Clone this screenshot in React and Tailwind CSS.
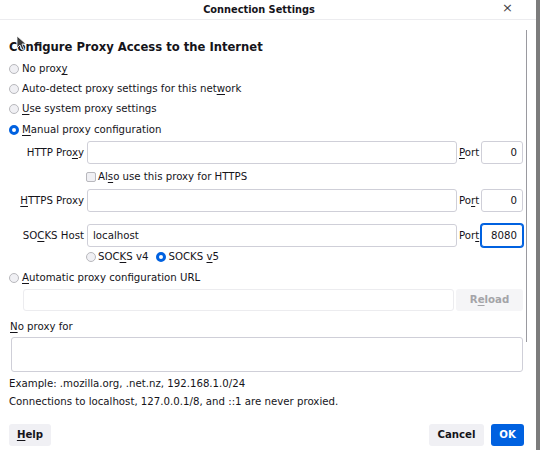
import React from 'react';

const U = ({ children }) => <span className="underline underline-offset-2">{children}</span>;

const Radio = ({ checked }) =>
    checked ? (
        <span className="inline-block w-[10px] h-[10px] rounded-full border-[3px] border-[#0061e0] bg-white shrink-0" />
    ) : (
        <span className="inline-block w-[10px] h-[10px] rounded-full border border-[#b8b8bd] bg-[#f0f0f4] shrink-0" />
    );

const Field = ({ value, focused, right }) => (
    <div
        className={
            'h-[23px] rounded-[3px] bg-white flex items-center px-[5px] ' +
            (right ? 'justify-end ' : '') +
            (focused ? 'border border-[#0061e0] shadow-[0_0_0_1px_#0061e0]' : 'border border-[#cfcfd8]')
        }
    >
        {value}
    </div>
);

const ProxyRow = ({ label, value, port, portLabel, focused }) => (
    <div className="flex items-center">
        <div className="w-[78px] text-right pr-[3px]">{label}</div>
        <div className="w-[370px]">
            <Field value={value} />
        </div>
        <div className="w-[24px] pl-[2px]">{portLabel}</div>
        <div className="w-[42px]">
            <Field value={port} right focused={focused} />
        </div>
    </div>
);

export default function App() {
    return (
        <div
            className="w-[540px] h-[450px] bg-white flex overflow-hidden relative text-[#15141a] text-[10.2px] leading-[14px]"
            style={{ fontFamily: '"DejaVu Sans", Verdana, sans-serif' }}
        >
            <div className="flex-1 flex flex-col relative">
                {/* Title bar */}
                <div className="h-[20px] border-b border-[#ececef] flex items-center justify-center relative pr-[18px]">
                    <span className="font-bold text-[9.8px]">Connection Settings</span>
                    <span className="absolute right-[23px] top-[1px] text-[13px] text-[#444]">×</span>
                </div>

                {/* Scroll area */}
                <div className="flex flex-col pl-[9px] w-[524px]">
                    <h1 className="mt-[19px] h-[16px] font-bold text-[11.6px] leading-[16px]">
                        Configure Proxy Access to the Internet
                    </h1>

                    <div className="mt-[4px] flex flex-col">
                        <label className="h-[20px] flex items-center gap-[3px]">
                            <Radio /> <span>No prox<U>y</U></span>
                        </label>
                        <label className="h-[20px] flex items-center gap-[3px]">
                            <Radio /> <span>Auto-detect proxy settings for this net<U>w</U>ork</span>
                        </label>
                        <label className="h-[20px] flex items-center gap-[3px]">
                            <Radio /> <span><U>U</U>se system proxy settings</span>
                        </label>
                        <label className="h-[21px] flex items-center gap-[3px]">
                            <Radio checked /> <span><U>M</U>anual proxy configuration</span>
                        </label>
                    </div>

                    <div className="flex flex-col mt-[1px]">
                        <ProxyRow
                            label={<span>HTTP Pro<U>x</U>y</span>}
                            portLabel={<span><U>P</U>ort</span>}
                            port="0"
                        />
                        <div className="h-[25px] flex items-center pl-[77px] gap-[2px]">
                            <span className="inline-block w-[10px] h-[10px] rounded-[2px] border border-[#b8b8bd] bg-[#f0f0f4]" />
                            <span>Al<U>s</U>o use this proxy for HTTPS</span>
                        </div>
                        <ProxyRow
                            label={<span><U>H</U>TTPS Proxy</span>}
                            portLabel={<span>Po<U>r</U>t</span>}
                            port="0"
                        />
                        <div className="mt-[12px]">
                            <ProxyRow
                                label={<span>SO<U>C</U>KS Host</span>}
                                value="localhost"
                                portLabel={<span>Por<U>t</U></span>}
                                port="8080"
                                focused
                            />
                        </div>
                        <div className="h-[20px] flex items-center pl-[77px]">
                            <label className="flex items-center gap-[2px]">
                                <Radio /> <span>SOC<U>K</U>S v4</span>
                            </label>
                            <label className="flex items-center gap-[3px] ml-[7px]">
                                <Radio checked /> <span>SOCKS <U>v</U>5</span>
                            </label>
                        </div>
                    </div>

                    <label className="h-[21px] flex items-center gap-[3px]">
                        <Radio /> <span><U>A</U>utomatic proxy configuration URL</span>
                    </label>
                    <div className="mt-[1px] flex items-center pl-[14px] gap-[2px]">
                        <div className="w-[431px] h-[22px] border border-[#ececef] rounded-[3px]" />
                        <div className="w-[67px] h-[22px] bg-[#f5f5f7] rounded-[3px] flex items-center justify-center font-bold text-[#a4a4a8]">
                            R<U>e</U>load
                        </div>
                    </div>

                    <div className="mt-[8px] h-[16px] flex items-center pl-[1px]">
                        <span><U>N</U>o proxy for</span>
                    </div>
                    <div className="mt-[2px] ml-[2px] w-[512px] h-[35px] border border-[#cfcfd8] rounded-[3px]" />
                    <div className="mt-[5px] h-[14px] flex items-center">
                        Example: .mozilla.org, .net.nz, 192.168.1.0/24
                    </div>
                    <div className="mt-[4px] h-[14px] flex items-center">
                        Connections to localhost, 127.0.0.1/8, and ::1 are never proxied.
                    </div>
                </div>

                {/* Scrollbar */}
                <div className="absolute left-[526px] top-[30px] w-[1px] h-[312px] bg-[#9a9aa0]" />

                {/* Buttons */}
                <div className="mt-[15px] flex items-center pl-[9px] pr-[12px]">
                    <button className="w-[42px] h-[22px] bg-[#f0f0f4] rounded-[3px] font-bold">
                        <U>H</U>elp
                    </button>
                    <div className="flex-1" />
                    <button className="w-[55px] h-[22px] bg-[#f0f0f4] rounded-[3px] font-bold">Cancel</button>
                    <button className="ml-[7px] w-[33px] h-[22px] bg-[#0061e0] text-white rounded-[3px] font-bold">OK</button>
                </div>

                {/* Mouse cursor */}
                <svg className="absolute left-[16px] top-[35px]" width="10" height="16" viewBox="0 0 10 16">
                    <path d="M1 1 L1 13 L4 10 L6 15 L8 14 L6 9 L10 9 Z" fill="#3a3a3a" stroke="#ffffff" strokeWidth="0.8" />
                </svg>
            </div>
            <div className="w-[4px] bg-[#7c7c7c]" />
        </div>
    );
}
